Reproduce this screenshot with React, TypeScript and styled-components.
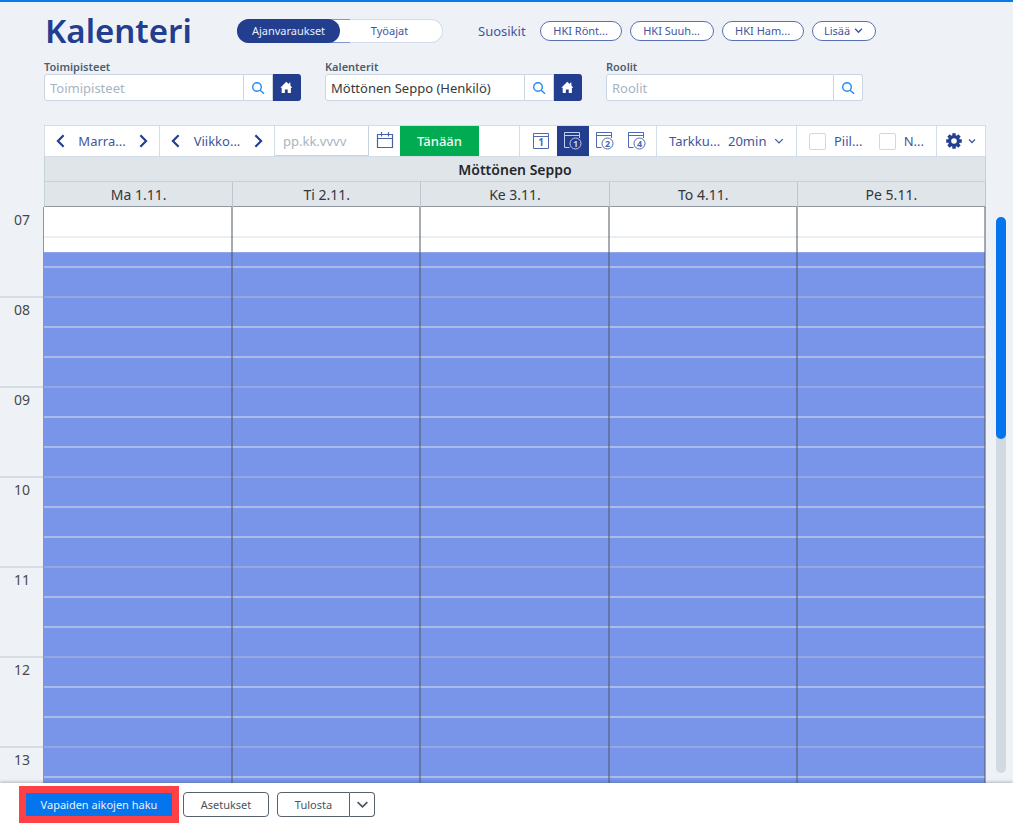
import React from "react";
import styled, { createGlobalStyle } from "styled-components";

const navy = "#233e8f";
const ink = "#3f569c";
const line = "#d3dde8";

const GlobalStyle = createGlobalStyle`
  *, *::before, *::after { box-sizing: border-box; }
  body { margin: 0; background: #eef2f7; }
  body, button, input, select {
    font-family: "Noto Sans", "Open Sans", sans-serif;
    font-size: 13px;
    line-height: 20px;
  }
  button, input, select { margin: 0; padding: 0; border: 0; border-radius: 0; }
  button { cursor: pointer; background: transparent; color: inherit; white-space: nowrap; }
  svg { display: block; flex: none; }
`;

const Shell = styled.div`
  display: flex;
  flex-direction: column;
  height: 100vh;
  overflow: hidden;
  border-top: 2px solid #0b78ea;
`;

/* ---------- header ---------- */

const Header = styled.header`
  display: flex;
  align-items: center;
  height: 57px;
  flex: none;
  padding-left: 45px;
`;

const Title = styled.h1`
  margin: 0;
  width: 192px;
  color: ${navy};
  font-size: 33px;
  font-weight: 600;
  line-height: 48px;
`;

const Toggle = styled.div`
  display: flex;
  width: 206px;
  height: 24px;
  border: 1px solid transparent;
  border-radius: 12px;
  background:
    linear-gradient(#fff, #fff) padding-box,
    linear-gradient(to right, #8496c8 0 55%, #d3daea 55%) border-box;
`;

const ToggleOption = styled.button<{ $active?: boolean }>`
  width: 103px;
  margin: -1px;
  border-radius: 12px;
  font-size: 11px;
  color: ${(p) => (p.$active ? "#e8edf8" : ink)};
  background: ${(p) => (p.$active ? navy : "transparent")};
`;

const Favorites = styled.nav`
  display: flex;
  align-items: center;
  gap: 8px;
  margin-left: 35px;
  color: ${ink};
`;

const FavoritesLabel = styled.span`
  margin-right: 6px;
  font-size: 13px;
`;

const Pill = styled.button<{ $width: number }>`
  display: flex;
  align-items: center;
  justify-content: center;
  gap: 4px;
  width: ${(p) => p.$width}px;
  height: 20px;
  border: 1px solid #5a70b2;
  border-radius: 10px;
  background: #fff;
  color: ${ink};
  font-size: 11px;
`;

/* ---------- filters ---------- */

const Filters = styled.div`
  display: flex;
  gap: 24px;
  padding: 0 24px 0 44px;
  flex: none;
`;

const Field = styled.div`
  display: flex;
  flex-direction: column;
  width: 257px;
`;

const FieldLabel = styled.label`
  color: #4e5d6b;
  font-size: 11px;
  font-weight: 600;
  line-height: 15px;
`;

const FieldRow = styled.div`
  display: flex;
  height: 27px;
`;

const TextInput = styled.input`
  flex: 1;
  min-width: 0;
  padding: 0 5px;
  border: 1px solid #cbd6e2;
  border-radius: 3px 0 0 3px;
  background: #fff;
  color: #36393d;
  font-size: 13px;
  &::placeholder { color: #a7b4c1; opacity: 1; }
`;

const SearchButton = styled.button<{ $last?: boolean }>`
  display: grid;
  place-items: center;
  width: 29px;
  border: 1px solid #cbd6e2;
  border-left: 0;
  border-radius: ${(p) => (p.$last ? "0 3px 3px 0" : "0")};
  background: #fff;
`;

const HomeButton = styled.button`
  display: grid;
  place-items: center;
  width: 28px;
  border-radius: 0 3px 3px 0;
  background: ${navy};
`;

/* ---------- toolbar ---------- */

const Toolbar = styled.div`
  display: flex;
  flex: none;
  height: 31px;
  margin: 24px 27px 0 44px;
  border: 1px solid ${line};
  border-bottom: 0;
  background: #fff;
  color: ${ink};
`;

const Group = styled.div<{ $width: number; $pad: number }>`
  display: flex;
  align-items: center;
  justify-content: space-between;
  flex: none;
  width: ${(p) => p.$width}px;
  padding: 0 ${(p) => p.$pad}px;
  border-right: 1px solid ${line};
`;

const IconButton = styled.button`
  display: grid;
  place-items: center;
`;

const DateInput = styled.input`
  width: 94px;
  padding: 0 8px;
  border: 1px solid #c9d4e1;
  border-width: 0 1px 1px 0;
  color: ${ink};
  &::placeholder { color: #a7b4c1; opacity: 1; }
`;

const DateButton = styled.button`
  display: grid;
  place-items: center;
  width: 31px;
`;

const TodayButton = styled.button`
  width: 79px;
  background: #00ab51;
  color: #f2fbf5;
  font-weight: 500;
`;

const Filler = styled.div`
  flex: 1;
  border-right: 1px solid ${line};
`;

const Views = styled.div`
  display: flex;
  padding: 0 3px 0 5px;
  border-right: 1px solid ${line};
`;

const ViewButton = styled.button<{ $active?: boolean }>`
  display: grid;
  place-items: center;
  width: 32px;
  background: ${(p) => (p.$active ? navy : "transparent")};
  color: ${(p) => (p.$active ? "#c3cee9" : "#5068ad")};
`;

const SelectBox = styled.span`
  display: flex;
  align-items: center;
`;

const Select = styled.select`
  appearance: none;
  width: 46px;
  background: transparent;
  color: ${ink};
`;

const Check = styled.label`
  display: flex;
  align-items: center;
  gap: 8px;
`;

const CheckBox = styled.input`
  appearance: none;
  width: 17px;
  height: 17px;
  border: 1px solid #cdd8e4;
  border-radius: 2px;
  background: #fff;
`;

const SettingsButton = styled.button`
  display: flex;
  align-items: center;
  justify-content: center;
  gap: 6px;
  width: 48px;
`;

/* ---------- calendar ---------- */

const PersonHeader = styled.div`
  flex: none;
  height: 26px;
  margin: 0 27px 0 44px;
  border: 1px solid #c8d0da;
  border-top-color: ${line};
  background: #e0e5ea;
  color: #24272b;
  font-size: 14px;
  font-weight: 600;
  line-height: 26px;
  text-align: center;
`;

const DayHeaders = styled.div`
  display: grid;
  grid-template-columns: repeat(5, 1fr);
  flex: none;
  height: 25px;
  margin: 0 27px 0 44px;
  border-left: 1px solid #c8d0da;
  border-bottom: 1px solid #9098a1;
  background: #e0e5ea;
`;

const DayHeader = styled.div`
  border-right: 1px solid #bdc5d1;
  color: #33363a;
  font-size: 14px;
  line-height: 26px;
  text-align: center;
`;

const Body = styled.main`
  display: flex;
  flex: 1;
  min-height: 0;
  overflow: hidden;
`;

const Hours = styled.div`
  flex: none;
  width: 44px;
  border-right: 1px solid #8d959d;
`;

const Hour = styled.div`
  height: 90px;
  padding-right: 13px;
  border-bottom: 2px solid #d5dde3;
  color: #44484d;
  font-size: 14px;
  line-height: 24px;
  text-align: right;
  &:first-child { height: 91px; padding-top: 1px; }
`;

const Days = styled.div`
  display: grid;
  grid-template-columns: repeat(5, 1fr);
  flex: 1;
  align-items: start;
`;

const Day = styled.div`
  position: relative;
  padding-top: 1px;
  background: #fff;
  &::after {
    content: "";
    position: absolute;
    inset: 0 -1px 0 auto;
    z-index: 2;
    width: 2px;
    background: rgba(79, 88, 97, 0.5);
  }
`;

const Slot = styled.div<{ $hour?: boolean }>`
  position: relative;
  height: 30px;
  border-bottom: 2px solid ${(p) => (p.$hour ? "rgba(170, 180, 216, 0.6)" : "rgba(216, 222, 230, 0.52)")};
`;

const Shift = styled.div`
  position: absolute;
  inset: 45px 0 0 0;
  border-top: 1px solid #8ea5ec;
  background: #7895e9;
`;

const Gutter = styled.div`
  flex: none;
  width: 28px;
  padding: 10px 7px 10px 11px;
`;

const Track = styled.div`
  height: 100%;
  border-radius: 5px;
  background: #d2dae1;
`;

const Thumb = styled.div`
  height: 40%;
  border-radius: 5px;
  background: #0475ec;
`;

/* ---------- footer ---------- */

const Footer = styled.footer`
  position: relative;
  z-index: 3;
  display: flex;
  align-items: center;
  flex: none;
  height: 40px;
  padding: 3px 19px 0;
  background: #fff;
  box-shadow: 0 -1px 3px rgba(60, 70, 85, 0.35);
`;

const Highlight = styled.div`
  flex: none;
  padding: 7px;
  background: #ff4145;
`;

const PrimaryButton = styled.button`
  display: block;
  width: 146px;
  height: 23px;
  background: #0475ec;
  color: #e9f3fe;
  font-size: 11px;
`;

const FooterButton = styled.button<{ $width: number }>`
  width: ${(p) => p.$width}px;
  height: 25px;
  border: 1px solid #59626c;
  border-radius: 4px;
  background: #fff;
  color: #4a545e;
  font-size: 11px;
`;

const FooterActions = styled.div`
  display: flex;
  gap: 8px;
  margin-left: 4px;
`;

const Split = styled.div`
  display: flex;
  & > :first-child { border-radius: 4px 0 0 4px; }
  & > :last-child {
    display: grid;
    place-items: center;
    border-left: 0;
    border-radius: 0 4px 4px 0;
  }
`;

/* ---------- icons ---------- */

const chevronPaths = {
  left: "M11 1.5 4.5 8l6.5 6.5",
  right: "M5 1.5 11.5 8 5 14.5",
  down: "M2 5l6 6 6-6",
};

const Chevron = ({ dir, size, width = 2, color = navy }: {
  dir: keyof typeof chevronPaths; size: number; width?: number; color?: string;
}) => (
  <svg width={size} height={size} viewBox="0 0 16 16" fill="none" stroke={color} strokeWidth={width} aria-hidden="true">
    <path d={chevronPaths[dir]} />
  </svg>
);

const SearchIcon = () => (
  <svg width="14" height="14" viewBox="0 0 14 14" fill="none" stroke="#2489f0" strokeWidth="1.4" aria-hidden="true">
    <circle cx="6" cy="6" r="4.3" />
    <path d="M9.2 9.2 13 12.8" />
  </svg>
);

const HomeIcon = () => (
  <svg width="14" height="13" viewBox="0 0 14 13" fill="#fff" aria-hidden="true">
    <path d="M6.3.8 8.9 3.2V1.8h1.500v2.800L12.3 6.800h-1.400V12H7.700V8.500H4.900V12H1.700V6.800H.3z" />
  </svg>
);

const CalendarIcon = () => (
  <svg width="18" height="18" viewBox="0 0 18 18" fill="none" stroke="#4a61a8" strokeWidth="1.2" aria-hidden="true">
    <path d="M1.5 2.5h15v13h-15zM1.5 6.5h15M5.5 0v4.5M12.5 0v4.5" />
  </svg>
);

const ViewIcon = ({ days, week }: { days: string; week?: boolean }) => (
  <svg width="20" height="20" viewBox="0 0 20 20" fill="none" stroke="currentColor" aria-hidden="true">
    {week ? (
      <>
        <path d="M6.5 16.5h-5v-15h15V7M1.5 4.5h15" />
        <circle cx="12.5" cy="12.5" r="5.5" />
      </>
    ) : (
      <path d="M2.5 2.5h15v15h-15zM2.5 5.5h15" />
    )}
    <text
      x={week ? 12.5 : 10}
      y={week ? 16 : 15}
      fill="currentColor"
      stroke="none"
      fontSize={week ? 9 : 10}
      fontWeight="700"
      textAnchor="middle"
    >
      {days}
    </text>
  </svg>
);

const GearIcon = () => (
  <svg width="16" height="16" viewBox="0 0 16 16" fill="none" stroke={navy} aria-hidden="true">
    <circle cx="8" cy="8" r="4.4" strokeWidth="3.2" />
    {[0, 45, 90, 135].map((a) => (
      <path key={a} d="M8 .2v2.6M8 13.2v2.6" strokeWidth="3.4" transform={`rotate(${a} 8 8)`} />
    ))}
  </svg>
);

/* ---------- page ---------- */

const favorites = [
  { label: "HKI Rönt...", width: 82 },
  { label: "HKI Suuh...", width: 84 },
  { label: "HKI Ham...", width: 82 },
];

const fields = [
  { id: "toimipisteet", label: "Toimipisteet", value: "", home: true },
  { id: "kalenterit", label: "Kalenterit", value: "Möttönen Seppo (Henkilö)", home: true },
  { id: "roolit", label: "Roolit", value: "", home: false },
];

const days = ["Ma 1.11.", "Ti 2.11.", "Ke 3.11.", "To 4.11.", "Pe 5.11."];
const hours = ["07", "08", "09", "10", "11", "12", "13"];
const slots = Array.from({ length: hours.length * 3 }, (_, i) => i);

export default function App() {
  return (
    <Shell>
      <GlobalStyle />
      <Header>
        <Title>Kalenteri</Title>
        <Toggle>
          <ToggleOption $active aria-pressed="true">Ajanvaraukset</ToggleOption>
          <ToggleOption aria-pressed="false">Työajat</ToggleOption>
        </Toggle>
        <Favorites aria-label="Suosikit">
          <FavoritesLabel>Suosikit</FavoritesLabel>
          {favorites.map((f) => (
            <Pill key={f.label} $width={f.width}>{f.label}</Pill>
          ))}
          <Pill $width={64}>
            Lisää
            <Chevron dir="down" size={9} width={2.5} color={ink} />
          </Pill>
        </Favorites>
      </Header>

      <Filters>
        {fields.map((f) => (
          <Field key={f.id}>
            <FieldLabel htmlFor={f.id}>{f.label}</FieldLabel>
            <FieldRow>
              <TextInput id={f.id} placeholder={f.label} defaultValue={f.value} />
              <SearchButton $last={!f.home} aria-label={`Hae: ${f.label}`}><SearchIcon /></SearchButton>
              {f.home && <HomeButton aria-label={`Oma: ${f.label}`}><HomeIcon /></HomeButton>}
            </FieldRow>
          </Field>
        ))}
      </Filters>

      <Toolbar>
        <Group $width={115} $pad={9}>
          <IconButton aria-label="Edellinen kuukausi"><Chevron dir="left" size={14} width={2.5} /></IconButton>
          Marra...
          <IconButton aria-label="Seuraava kuukausi"><Chevron dir="right" size={14} width={2.5} /></IconButton>
        </Group>
        <Group $width={115} $pad={9}>
          <IconButton aria-label="Edellinen viikko"><Chevron dir="left" size={14} width={2.5} /></IconButton>
          Viikko...
          <IconButton aria-label="Seuraava viikko"><Chevron dir="right" size={14} width={2.5} /></IconButton>
        </Group>
        <DateInput placeholder="pp.kk.vvvv" aria-label="Päivämäärä" />
        <DateButton aria-label="Valitse päivä"><CalendarIcon /></DateButton>
        <TodayButton>Tänään</TodayButton>
        <Filler />
        <Views>
          <ViewButton aria-label="Päivä"><ViewIcon days="1" /></ViewButton>
          <ViewButton $active aria-label="Viikko"><ViewIcon days="1" week /></ViewButton>
          <ViewButton aria-label="Kaksi viikkoa"><ViewIcon days="2" week /></ViewButton>
          <ViewButton aria-label="Neljä viikkoa"><ViewIcon days="4" week /></ViewButton>
        </Views>
        <Group $width={140} $pad={12}>
          <label htmlFor="tarkkuus">Tarkku...</label>
          <SelectBox>
            <Select id="tarkkuus" defaultValue="20">
              <option value="20">20min</option>
            </Select>
            <Chevron dir="down" size={10} color={ink} />
          </SelectBox>
        </Group>
        <Group $width={140} $pad={12}>
          <Check><CheckBox type="checkbox" />Piil...</Check>
          <Check><CheckBox type="checkbox" />N...</Check>
        </Group>
        <SettingsButton aria-label="Asetusvalikko">
          <GearIcon />
          <Chevron dir="down" size={8} width={2.5} color={ink} />
        </SettingsButton>
      </Toolbar>

      <PersonHeader>Möttönen Seppo</PersonHeader>
      <DayHeaders>
        {days.map((d) => <DayHeader key={d}>{d}</DayHeader>)}
      </DayHeaders>

      <Body>
        <Hours>
          {hours.map((h) => <Hour key={h}>{h}</Hour>)}
        </Hours>
        <Days>
          {days.map((d) => (
            <Day key={d}>
              <Shift />
              {slots.map((s) => <Slot key={s} $hour={s % 3 === 2} />)}
            </Day>
          ))}
        </Days>
        <Gutter>
          <Track><Thumb /></Track>
        </Gutter>
      </Body>

      <Footer>
        <Highlight>
          <PrimaryButton>Vapaiden aikojen haku</PrimaryButton>
        </Highlight>
        <FooterActions>
          <FooterButton $width={86}>Asetukset</FooterButton>
          <Split>
            <FooterButton $width={73}>Tulosta</FooterButton>
            <FooterButton $width={25} aria-label="Lisää tulostusvaihtoehtoja">
              <Chevron dir="down" size={13} color="#4a545e" />
            </FooterButton>
          </Split>
        </FooterActions>
      </Footer>
    </Shell>
  );
}
